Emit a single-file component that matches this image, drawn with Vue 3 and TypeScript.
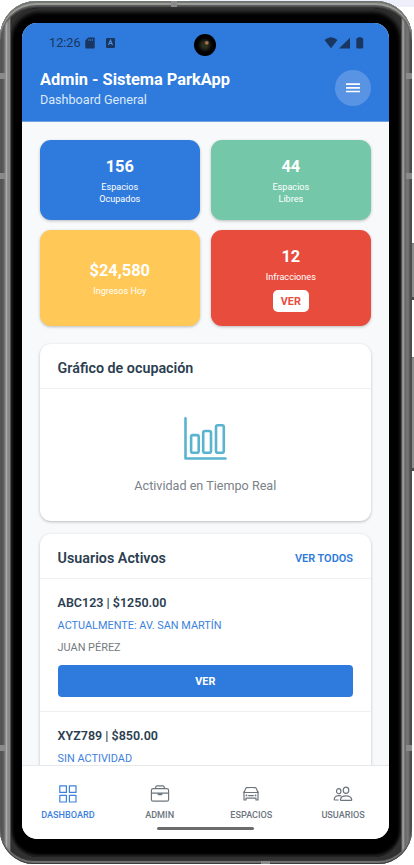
<script setup lang="ts">
interface Stat { value: string; lines: string[]; tone: string; action?: string }
interface User { title: string; status: string; name: string }
interface Tab { label: string; icon: string; active?: boolean }

const stats: Stat[] = [
  { value: '156', lines: ['Espacios', 'Ocupados'], tone: 'blue' },
  { value: '44', lines: ['Espacios', 'Libres'], tone: 'green' },
  { value: '$24,580', lines: ['Ingresos Hoy'], tone: 'yellow' },
  { value: '12', lines: ['Infracciones'], tone: 'red', action: 'VER' },
]
const users: User[] = [
  { title: 'ABC123 | $1250.00', status: 'ACTUALMENTE: AV. SAN MARTÍN', name: 'JUAN PÉREZ' },
  { title: 'XYZ789 | $850.00', status: 'SIN ACTIVIDAD', name: '' },
]
const tabs: Tab[] = [
  { label: 'DASHBOARD', icon: 'grid', active: true },
  { label: 'ADMIN', icon: 'case' },
  { label: 'ESPACIOS', icon: 'car' },
  { label: 'USUARIOS', icon: 'people' },
]
</script>

<template>
  <div class="stage">
    <i class="desk-strip"></i>
    <i class="side-key power"></i>
    <i class="side-key volume"></i>
    <div class="phone">
      <div class="bezel">
        <div class="screen">
          <header class="header">
            <div class="status">
              <span class="clock">12:26</span>
              <svg class="sd" width="10" height="12" viewBox="0 0 10 12"><path d="M3.2.5H9Q9.7.5 9.7 1.2V10.5Q9.7 11.5 8.8 11.5H1.2Q.3 11.5.3 10.5V3.5Z" fill="#18365f" /><path d="M3.8 2V4M5.7 2V4M7.6 2V4" stroke="#2e7add" stroke-width=".8" /></svg>
              <svg class="akey" width="9" height="10" viewBox="0 0 9 10"><rect width="9" height="10" rx="1.2" fill="#18365f" /><path d="M2.5 7 4.5 2.2 6.5 7M3.2 5.5H5.8" fill="none" stroke="#4b90e4" stroke-width="1.1" /></svg>
              <span class="grow"></span>
              <svg class="signals" width="40" height="12" viewBox="0 0 40 12" fill="#18365f"><path d="M.5 3Q7-2.4 13.5 3L7 11.3Z" /><path d="M15 11.4 26 .8V11.4Z" /><path d="M34 1V.3H37.5V1H38Q39.2 1 39.2 2.2V10.2Q39.2 11.4 38 11.4H33.5Q32.3 11.4 32.3 10.2V2.2Q32.3 1 33.5 1Z" /></svg>
            </div>
            <div class="title-row">
              <div class="titles">
                <h1>Admin - Sistema ParkApp</h1>
                <p>Dashboard General</p>
              </div>
              <button class="menu"><svg width="14" height="10" viewBox="0 0 14 10"><path d="M0 1.2H14M0 4.8H14M0 8.5H14" stroke="#fff" stroke-width="1.7" /></svg></button>
            </div>
          </header>
          <main class="content">
            <section class="stats">
              <div v-for="s in stats" :key="s.value" class="stat" :class="s.tone">
                <strong>{{ s.value }}</strong>
                <span v-for="l in s.lines" :key="l" class="line">{{ l }}</span>
                <button v-if="s.action">{{ s.action }}</button>
              </div>
            </section>
            <section class="card">
              <div class="card-head"><h2>Gráfico de ocupación</h2></div>
              <div class="chart">
                <svg width="44" height="44" viewBox="0 0 44 44" fill="none" stroke="#5bb4cf" stroke-width="2.6" stroke-linecap="round" stroke-linejoin="round"><path d="M2.5 2.3V42.5H42.5" /><rect x="8.1" y="19.1" width="7.6" height="17.7" rx="1.8" /><rect x="20.2" y="15" width="7.8" height="21.8" rx="1.8" /><rect x="33" y="9.3" width="7.8" height="27.5" rx="1.8" /></svg>
                <p>Actividad en Tiempo Real</p>
              </div>
            </section>
            <section class="card">
              <div class="card-head"><h2>Usuarios Activos</h2><a>VER TODOS</a></div>
              <article v-for="u in users" :key="u.title" class="user">
                <h3>{{ u.title }}</h3>
                <p class="where">{{ u.status }}</p>
                <template v-if="u.name">
                  <p class="name">{{ u.name }}</p>
                  <button>VER</button>
                </template>
              </article>
            </section>
          </main>
          <nav class="tabs">
            <div v-for="t in tabs" :key="t.label" class="tab" :class="{ active: t.active }">
              <svg width="20" height="20" viewBox="0 0 20 20" fill="none" stroke="currentColor" stroke-width="1.2" stroke-linejoin="round" stroke-linecap="round">
                <path v-if="t.icon === 'grid'" d="M1.8 1.8H8.4V8.4H1.8ZM11.4 1.8H18V8.4H11.4ZM1.8 11.4H8.4V18H1.8ZM11.4 11.4H18V18H11.4Z" />
                <g v-else-if="t.icon === 'case'"><rect x="1.4" y="4.6" width="17.2" height="12.6" rx="1.8" /><path d="M5.7 4.4V3.4Q5.7 1.9 7.2 1.9H12.8Q14.3 1.9 14.3 3.4V4.4M1.6 9.2H18.4" /><path d="M7.7 10.3H12.3" stroke-width="2" stroke-linecap="butt" /></g>
                <g v-else-if="t.icon === 'car'"><path d="M3 8.7 4.6 4.6Q4.9 3.8 5.7 3.7Q10 3.3 14.3 3.7Q15.1 3.8 15.4 4.6L17 8.7V16H15V14.2H5V16H3ZM3 8.5H17M7.6 11.6H12.4M2.4 8H3M17 8H17.6" /><path d="M5.4 11.4H5.5M14.5 11.4H14.6" stroke-width="1.7" /></g>
                <g v-else><ellipse cx="13" cy="6.2" rx="2.8" ry="3.1" /><path d="M7.4 15.8Q7.8 11.8 13 11.8T18.8 15.8Q18.7 16.4 18 16.4H8Q7.4 16.3 7.4 15.8Z" /><ellipse cx="5.7" cy="7.2" rx="2.2" ry="2.5" /><path d="M8 11.8Q1.4 10.8 1.2 15.6Q1.2 16 1.8 16H5.2" /></g>
              </svg>
              <span>{{ t.label }}</span>
            </div>
            <i class="home"></i>
          </nav>
        </div>
      </div>
      <i class="lens"></i>
    </div>
    <i class="seam top"></i>
    <i class="seam bottom"></i>
    <i class="seam left a"></i>
    <i class="seam left b"></i>
    <i class="seam left c"></i>
    <i class="seam right a"></i>
    <i class="seam right b"></i>
    <i class="seam right c"></i>
  </div>
</template>

<style>
body { margin: 0; background: #fff; overflow: hidden; }
</style>

<style scoped>
* { box-sizing: border-box; }
h1, h2, h3, p { margin: 0; }
button { border: 0; padding: 0; font-family: inherit; }
i { display: block; }
.stage { position: relative; width: 414px; height: 865px; overflow: hidden; font-family: Roboto, sans-serif; color: #2c3e50; }
.desk-strip { position: absolute; left: 190px; right: 0; top: 0; height: 7px; background: #edf0fa; }
.side-key { position: absolute; left: 410px; width: 4px; background: #8e8e8e; border: solid #777; border-width: 1px 0 3px 1px; border-bottom-color: #4c4c4c; }
.power { top: 243px; height: 57px; }
.volume { top: 357px; height: 114px; }
.phone { position: relative; width: 412px; height: 863px; margin-top: 1px; padding: 7px 11px; border-radius: 36px 36px 34px 34px; background: linear-gradient(90deg, #484848 0, #626262 4px, #bcbcbc 7px, #646464 8px, #aaa 9px, #303030 11px, #303030 401px, #aaa 403px, #686868 405px, #777 408px, #333 412px); box-shadow: inset 0 2px 1px #71756f, inset 0 4px 1px #a2a49f, inset 0 6px 1px #555, inset 0 -1px 1px #333, inset 0 -3px 1px #777; }
.bezel { height: 849px; padding: 15px 12px 17px 11px; background: #000; border-radius: 28px 28px 27px 27px; box-shadow: inset 0 4px 4px #333, inset 0 -2px 3px #292929; }
.screen { width: 367px; height: 816px; display: flex; flex-direction: column; overflow: hidden; border-radius: 15px; background: #f8f9fb; }
.header { height: 99px; flex: none; padding: 12px 18px 0; background: #2f7bdd; border-bottom: 1px solid #6ea3e6; color: #fff; }
.status { height: 16px; display: flex; align-items: center; padding: 0 7px 0 9px; }
.clock { font-size: 12.7px; color: #18365f; line-height: 16px; width: 36px; }
.akey { margin-left: 11px; }
.sd { flex: none; }
.grow { flex: 1; }
.title-row { display: flex; justify-content: space-between; align-items: flex-start; margin-top: 18px; }
.titles { padding-top: 1px; }
h1 { font-size: 16.4px; line-height: 20px; font-weight: 700; white-space: nowrap; }
.header p { font-size: 12.6px; line-height: 16px; margin-top: 2px; color: #dce9fa; }
.menu { width: 36px; height: 36px; border-radius: 50%; background: #5994e4; display: flex; align-items: center; justify-content: center; margin-top: 1px; }
.content { flex: 1; min-height: 0; overflow: hidden; padding: 18px 18px 0 17.6px; }
.stats { display: grid; grid-template-columns: 160.3px 160.3px; grid-template-rows: 79.7px 96px; justify-content: space-between; row-gap: 10.3px; }
.stat { border-radius: 11px; color: #fff; display: flex; flex-direction: column; align-items: center; justify-content: center; padding-top: 3px; box-shadow: 0 1px 3px rgba(0,0,0,.25); }
.stat strong { font-size: 16.4px; line-height: 20px; margin-bottom: 4px; }
.stat .line { font-size: 9.1px; line-height: 12.5px; }
.blue { background: #2f7bdd; }
.green { background: #74c8a9; }
.yellow { background: #ffc857; }
.red { background: #e84c3d; }
.stat button { width: 36px; height: 22px; margin-top: 7px; border-radius: 5px; background: #fff; color: #e84c3d; font-size: 10.8px; font-weight: 700; }
.card { margin-top: 18px; background: #fff; border-radius: 11px; box-shadow: 0 1px 3px rgba(0,0,0,.25); }
.card + .card { margin-top: 13.5px; }
.card-head { height: 45px; padding: 4px 18px 0; display: flex; align-items: center; justify-content: space-between; border-bottom: 1px solid #eef0f1; }
h2 { font-size: 14.3px; font-weight: 600; line-height: 20px; }
.card-head a { font-size: 10.95px; font-weight: 600; color: #2f7bdd; }
.chart { height: 132px; display: flex; flex-direction: column; align-items: center; padding-top: 27px; }
.chart svg { margin-right: .6px; }
.chart p { margin-top: 17px; font-size: 12.6px; line-height: 18px; color: #7b8187; }
.user { padding: 15px 18px 14px; border-bottom: 1px solid #eef0f1; }
h3 { font-size: 12.5px; line-height: 18px; font-weight: 600; }
.user p { font-size: 10.9px; line-height: 16px; margin-top: 6px; color: #747a80; }
.user .where { color: #3d81dc; }
.user button { display: block; width: 100%; height: 32px; margin-top: 9px; background: #2f7bdd; color: #fff; border-radius: 4px; font-size: 10.8px; font-weight: 700; }
.tabs { position: relative; height: 74px; flex: none; border-top: 1px solid #e6e8ea; background: #fff; display: grid; grid-template-columns: repeat(4, 1fr); }
.tab { display: flex; flex-direction: column; align-items: center; padding-top: 18px; color: #6c757d; font-size: 9.1px; font-weight: 500; line-height: 12px; }
.tab span { margin-top: 5px; }
.tab.active { color: #3c80df; }
.home { position: absolute; left: 135px; bottom: 9px; width: 97px; height: 3px; border-radius: 2px; background: #6c6c6c; }
.lens { position: absolute; left: 194px; top: 33px; width: 22px; height: 22px; border-radius: 50%; background: radial-gradient(circle at 58% 40%, #a87650 0 1px, transparent 2.5px), radial-gradient(circle, #2b2e1b 0 3px, #171713 5px, #050505 7px, #000 9px); }
.seam { position: absolute; background: #8a8a8a; }
.seam.top { left: 171px; top: 1px; width: 6px; height: 6px; }
.seam.bottom { left: 261px; top: 861px; width: 9px; height: 3px; }
.seam.left { left: 0; width: 5px; height: 6px; }
.seam.right { left: 406px; width: 6px; height: 6px; }
.seam.a { top: 73px; }
.seam.b { top: 173px; }
.seam.c { top: 745px; }
</style>
